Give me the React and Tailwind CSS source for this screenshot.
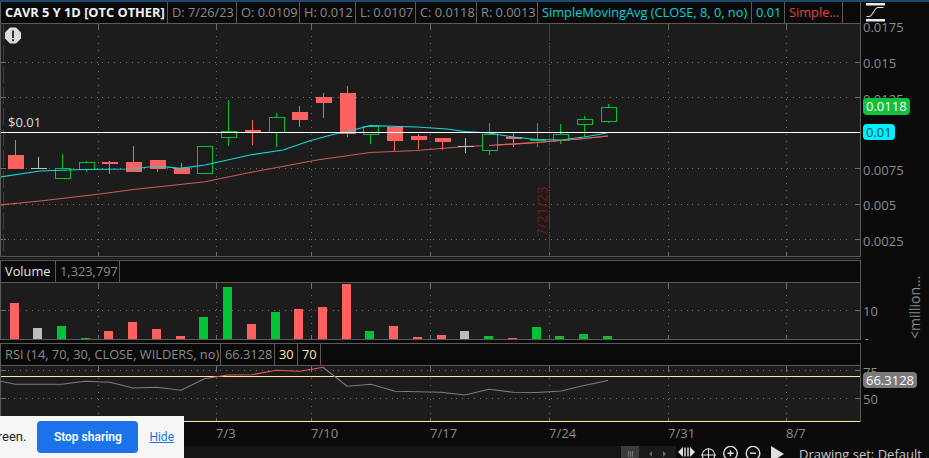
const FONT = "font-['Open_Sans',_'Noto_Sans',_sans-serif]"

const GRID_X = [98.5, 216.5, 311.5, 430.5, 549.5, 668.5, 786.5]
const RED = '#ff6060'
const GREEN = '#00c234'
const GRAY = '#bdbdbd'

// x comes from the index, all y values are page pixels
const candles = [
  { k: 'r', hi: 140, top: 155, bot: 169, lo: 169, vol: 303 },
  { k: 'n', hi: 157, top: 168, bot: 169, lo: 169, vol: 328 },
  { k: 'g', hi: 154, top: 168, bot: 178, lo: 178, vol: 326 },
  { k: 'g', hi: 161, top: 162, bot: 169, lo: 172, vol: 338 },
  { k: 'r', hi: 161, top: 162, bot: 164, lo: 174, vol: 331 },
  { k: 'r', hi: 146, top: 162, bot: 172, lo: 172, vol: 322 },
  { k: 'r', hi: 160, top: 160, bot: 169, lo: 172, vol: 329 },
  { k: 'r', hi: 163, top: 168, bot: 174, lo: 174, vol: 336 },
  { k: 'g', hi: 146, top: 146, bot: 173, lo: 173, vol: 317 },
  { k: 'g', hi: 100, top: 131, bot: 137, lo: 146, vol: 287 },
  { k: 'r', hi: 120, top: 130, bot: 132, lo: 145, vol: 324 },
  { k: 'g', hi: 113, top: 117, bot: 132, lo: 147, vol: 312 },
  { k: 'r', hi: 106, top: 112, bot: 120, lo: 127, vol: 309 },
  { k: 'r', hi: 93, top: 97, bot: 103, lo: 118, vol: 307 },
  { k: 'r', hi: 86, top: 93, bot: 134, lo: 137, vol: 284 },
  { k: 'g', hi: 125, top: 126, bot: 134, lo: 144, vol: 331 },
  { k: 'r', hi: 126, top: 127, bot: 141, lo: 151, vol: 326 },
  { k: 'r', hi: 134, top: 136, bot: 140, lo: 149, vol: 337 },
  { k: 'r', hi: 138, top: 138, bot: 142, lo: 150, vol: 335 },
  { k: 'n', hi: 138, top: 146, bot: 147, lo: 153, vol: 331 },
  { k: 'g', hi: 123, top: 134, bot: 150, lo: 155, vol: 336 },
  { k: 'r', hi: 133, top: 137, bot: 139, lo: 147, vol: 338 },
  { k: 'gf', hi: 123, top: 139, bot: 141, lo: 147, vol: 327 },
  { k: 'g', hi: 124, top: 134, bot: 140, lo: 144, vol: 336 },
  { k: 'g', hi: 116, top: 119, bot: 124, lo: 137, vol: 334 },
  { k: 'g', hi: 104, top: 107, bot: 121, lo: 123, vol: 336 },
]
const cx = (i) => Math.round(14.5 + 23.73 * i) + 0.5
const colorOf = (k) => (k === 'r' ? RED : k === 'n' ? GRAY : GREEN)

const cyanLine = '0,177 40,171 83,169.5 133,169 157,166 180,168.3 205,165 250,155 283,150 310,140.7 333,134.5 353,130 370,125.7 417,127 447,129 465,131.5 489,133 513,137 537,139.5 561,140 584,137 607,133'
const redLine = '0,205 40,201 100,194 133,189.5 157,187 205,181.7 250,172.5 317,160 370,152.5 417,150.5 465,146.5 489,145.5 537,142.5 584,138.5 608,136'
const rsiA = '0,381 15,384.3 62,384.3 85,381.3 110,382.3 133,388 157,387.3 181,390.3 205,378.5'
const rsiB = '205,378.5 228,375 252,374.7 276,370.3 300,371.3 323,367.3'
const rsiC = '323,367.3 347,386.3 371,384.3 395,391.3 441,392.3 465,395 489,389.3 513,392.3 537,392.5 561,391 584,385.5 608,380.5'

function HeaderCell({ children, className = '', width }) {
  return (
    <div
      className={`flex h-full shrink-0 items-center whitespace-nowrap border-r border-[#5a5a5a] pl-[4px] text-[12.8px] ${className}`}
      style={{ width }}
    >
      {children}
    </div>
  )
}

function Grid({ top, bottom, rows }) {
  return (
    <g shapeRendering="crispEdges">
      {rows.map((y) => (
        <g key={y}>
          <line x1="8" x2="850" y1={y} y2={y} stroke="#6e6e6e" strokeDasharray="1 4.9" />
          <line x1="1" x2="6" y1={y} y2={y} stroke="#6e6e6e" />
          <line x1="855" x2="861" y1={y} y2={y} stroke="#6e6e6e" />
        </g>
      ))}
      {GRID_X.map((x) => (
        <g key={x}>
          <line x1={x} x2={x} y1={top + 5} y2={bottom - 4} stroke="#6e6e6e" strokeDasharray="1 6" />
          <line x1={x} x2={x} y1={top} y2={top + 5} stroke="#6e6e6e" />
          <line x1={x} x2={x} y1={bottom - 4} y2={bottom} stroke="#6e6e6e" />
        </g>
      ))}
    </g>
  )
}

function Candle({ c, i }) {
  const x = cx(i)
  const color = colorOf(c.k)
  return (
    <g shapeRendering="crispEdges">
      <line x1={x} x2={x} y1={c.hi} y2={c.lo} stroke={color} />
      {c.k === 'g' ? (
        <rect x={x - 7.5} y={c.top + 0.5} width="15" height={c.bot - c.top} fill="#1c1c1c" stroke={color} />
      ) : (
        <rect x={x - 8} y={c.top} width="16" height={c.bot - c.top} fill={color} />
      )}
    </g>
  )
}

function AxisLabel({ y, children }) {
  return (
    <span className="absolute left-[2px] -translate-y-1/2 text-[13px] leading-none text-[#8c8c8c]" style={{ top: y }}>
      {children}
    </span>
  )
}

function Badge({ y, h, className, children }) {
  return (
    <span
      className={`absolute left-[2px] flex items-center rounded-[4px] px-[3px] text-[13px] leading-none ${className}`}
      style={{ top: y, height: h }}
    >
      {children}
    </span>
  )
}

function CurveIcon() {
  return (
    <svg width="20" height="20" viewBox="0 0 20 20" className="absolute left-[5px] top-[1px]" fill="none">
      <rect x="0" y="0" width="19" height="2.5" fill="#e8e8e8" />
      <rect x="0" y="16" width="19" height="2.5" fill="#e8e8e8" />
      <path d="M0.5 13.5 H3 C7 13.5 8 4.5 12 4.5 H17.5" stroke="#e0e0e0" strokeWidth="1.1" />
    </svg>
  )
}

function Toolbar() {
  return (
    <div className="flex h-[12px] items-start overflow-hidden">
      <div className="h-full w-[621px] bg-[#141414]" />
      <div className="flex h-full w-[18px] items-center justify-center gap-[1px] bg-[#3c3c3c] pt-[3px]">
        <span className="h-[6px] w-px bg-[#777]" />
        <span className="h-[6px] w-px bg-[#777]" />
        <span className="h-[6px] w-px bg-[#777]" />
      </div>
      <div className="flex h-full w-[37px] items-center justify-around bg-[#1a1a1a] px-[4px] pt-[3px]">
        <span className="h-0 w-0 border-y-[3px] border-r-[3px] border-y-transparent border-r-[#666]" />
        <span className="h-0 w-0 border-y-[3px] border-l-[3px] border-y-transparent border-l-[#666]" />
      </div>
      <svg width="110" height="16" viewBox="0 0 110 16" className="shrink-0" fill="none" stroke="#e0e0e0">
        <path d="M2 6 L7 1 V11 Z" fill="#e0e0e0" stroke="none" />
        <path d="M19 6 L14 1 V11 Z" fill="#e0e0e0" stroke="none" />
        <path d="M9 1.5 V10.5 M12 1.5 V10.5" strokeWidth="1.5" />
        <circle cx="32.5" cy="9" r="6.2" strokeWidth="1.1" />
        <path d="M25 9 H40 M32.5 2 V16" strokeWidth="1.1" />
        <circle cx="54.5" cy="7.2" r="6.8" strokeWidth="1.4" />
        <path d="M51.5 7.2 H57.5 M54.5 4.2 V10.2" strokeWidth="1.4" />
        <circle cx="77" cy="7.2" r="6.8" strokeWidth="1.4" />
        <path d="M74 7.2 H80" strokeWidth="1.4" />
        <path d="M95 0 L95 16 L108 8 Z" fill="#e0e0e0" stroke="none" />
      </svg>
      <span className="ml-[13px] whitespace-nowrap text-[13px] leading-[16px] text-[#c8c8c8]">Drawing set: Default</span>
      <span className="ml-[3px] text-[13px] leading-[16px] text-[#c8c8c8]">,</span>
    </div>
  )
}

export default function App() {
  return (
    <div className={`relative h-[458px] w-[929px] overflow-hidden bg-[#0a0a0a] ${FONT}`}>
      <div className="h-[2px] bg-[#1d4a6b]" />

      {/* price pane */}
      <div className="flex h-[255px]">
        <div className="w-[861px] border-x border-b border-[#5a5a5a]">
          <div className="flex h-[22px] border-b border-[#5a5a5a] text-[#8a8a8a]">
            <HeaderCell width={167} className="pl-[3px] font-bold text-[#f2f2f2]">CAVR 5 Y 1D [OTC OTHER]</HeaderCell>
            <HeaderCell width={69}>D: 7/26/23</HeaderCell>
            <HeaderCell width={63}>O: 0.0109</HeaderCell>
            <HeaderCell width={56}>H: 0.012</HeaderCell>
            <HeaderCell width={60}>L: 0.0107</HeaderCell>
            <HeaderCell width={61}>C: 0.0118</HeaderCell>
            <HeaderCell width={61}>R: 0.0013</HeaderCell>
            <HeaderCell width={214} className="pl-[3px] text-[#00d4dc]">SimpleMovingAvg (CLOSE, 8, 0, no)</HeaderCell>
            <HeaderCell width={33} className="pl-[3px] text-[#00d4dc]">0.01</HeaderCell>
            <HeaderCell width={58} className="pl-[3px] text-[#e84040]">Simple...</HeaderCell>
          </div>
          <svg width="859" height="232" viewBox="1 24 859 232" className="block bg-[#1c1c1c]">
            <Grid top={24} bottom={256} rows={[62.5, 97.5, 168.5, 204.5, 239.5]} />
            <line x1="3.5" x2="3.5" y1="24" y2="256" stroke="#8f1c1c" strokeDasharray="17 4" shapeRendering="crispEdges" />
            <line x1="549.5" x2="549.5" y1="24" y2="256" stroke="#951c1c" strokeDasharray="17 4" shapeRendering="crispEdges" />
            <text x="0" y="0" transform="translate(546.5 236.5) rotate(-90)" fontSize="14" fill="#701818">7/21/23</text>
            <polyline points={redLine} fill="none" stroke="#cf5a5a" strokeWidth="1.15" />
            {candles.map((c, i) => <Candle key={i} c={c} i={i} />)}
            <polyline points={cyanLine} fill="none" stroke="#10d8dc" strokeWidth="1.15" />
            <polyline points={redLine.split(' ').slice(11).join(' ')} fill="none" stroke="#e06060" strokeWidth="1.15" />
            <line x1="0" x2="861" y1="132.5" y2="132.5" stroke="#ffffff" shapeRendering="crispEdges" />
            <path d="M10 27.5 h6 l5 5 v6 l-5 5 h-6 l-5 -5 v-6 z" fill="#dcdcdc" />
            <rect x="12" y="30.5" width="2" height="7.5" fill="#333" />
            <rect x="12" y="39.2" width="2" height="2" fill="#333" />
          </svg>
        </div>
        <div className="relative flex-1">
          <CurveIcon />
          <AxisLabel y={25}>0.0175</AxisLabel>
          <AxisLabel y={61}>0.015</AxisLabel>
          <AxisLabel y={97}>0.0125</AxisLabel>
          <Badge y={96} h={17} className="bg-[#0fc03c] text-white">0.0118</Badge>
          <Badge y={122} h={16} className="bg-[#00f0ff] text-[#1a4a50]">0.01</Badge>
          <AxisLabel y={167.5}>0.0075</AxisLabel>
          <AxisLabel y={203}>0.005</AxisLabel>
          <AxisLabel y={238.5}>0.0025</AxisLabel>
        </div>
      </div>

      <div className="mt-[1px] h-px w-[861px] bg-[#3a3a3a]" />

      {/* last-price label, over the price chart just above the white line */}
      <span className="absolute left-[8px] top-[116px] text-[13px] leading-none text-[#dcdcdc]">$0.01</span>

      {/* volume pane */}
      <div className="mt-[1px] flex h-[80px]">
        <div className="w-[861px] border border-[#5a5a5a]">
          <div className="flex h-[22px] border-b border-[#5a5a5a] text-[#8a8a8a]">
            <HeaderCell width={55} className="pl-[3px] text-[#e6e6e6]">Volume</HeaderCell>
            <HeaderCell width={64}>1,323,797</HeaderCell>
          </div>
          <svg width="859" height="56" viewBox="1 283 859 56" className="block bg-[#1c1c1c]">
            <Grid top={283} bottom={339} rows={[310.5]} />
            <g shapeRendering="crispEdges">
              {candles.map((c, i) => (
                <rect key={i} x={cx(i) - 5.5} y={c.vol} width="9" height={339 - c.vol} fill={colorOf(c.k)} />
              ))}
            </g>
          </svg>
        </div>
        <div className="relative flex-1 overflow-hidden">
          <AxisLabel y={50.5}>10</AxisLabel>
          <AxisLabel y={83}>0</AxisLabel>
          <span className="absolute left-[54px] top-[72px] origin-left -rotate-90 whitespace-nowrap text-[14px] leading-none text-[#8c8c8c]">&lt;million...</span>
        </div>
      </div>

      {/* rsi pane */}
      <div className="mt-[3px] flex h-[79px]">
        <div className="w-[861px] border-x border-t border-[#5a5a5a]">
          <div className="flex h-[22px] border-b border-[#5a5a5a] text-[#8a8a8a]">
            <HeaderCell width={220} className="pl-[3px]">RSI (14, 70, 30, CLOSE, WILDERS, no)</HeaderCell>
            <HeaderCell width={54}>66.3128</HeaderCell>
            <HeaderCell width={23} className="text-[#ffe9a8]">30</HeaderCell>
            <HeaderCell width={23} className="text-[#ffe9a8]">70</HeaderCell>
          </div>
          <svg width="859" height="56" viewBox="1 366 859 56" className="block bg-[#1c1c1c]">
            <Grid top={366} bottom={422} rows={[370.5, 398.5]} />
            <line x1="0" x2="861" y1="376.5" y2="376.5" stroke="#ffe9a0" shapeRendering="crispEdges" />
            <line x1="0" x2="861" y1="421.5" y2="421.5" stroke="#ffe9a0" shapeRendering="crispEdges" />
            <polyline points={rsiA} fill="none" stroke="#7c7c7c" strokeWidth="1.1" />
            <polyline points={rsiB} fill="none" stroke="#e85858" strokeWidth="1.1" />
            <polyline points={rsiC} fill="none" stroke="#7c7c7c" strokeWidth="1.1" />
          </svg>
        </div>
        <div className="relative flex-1">
          <AxisLabel y={29}>75</AxisLabel>
          <Badge y={29} h={16} className="bg-[#7a7a7a] text-white">66.3128</Badge>
          <AxisLabel y={55.5}>50</AxisLabel>
        </div>
      </div>

      {/* time axis */}
      <div className="relative h-[24px] text-[13px] leading-none text-[#8c8c8c]">
        <span className="absolute left-[216px] top-[5px]">7/3</span>
        <span className="absolute left-[311px] top-[5px]">7/10</span>
        <span className="absolute left-[430px] top-[5px]">7/17</span>
        <span className="absolute left-[549px] top-[5px]">7/24</span>
        <span className="absolute left-[668px] top-[5px]">7/31</span>
        <span className="absolute left-[786px] top-[5px]">8/7</span>
      </div>

      <Toolbar />

      {/* screen-share notice, over the chart */}
      <div className="absolute bottom-0 left-0 flex h-[42px] w-[184px] items-center justify-end gap-[11px] overflow-hidden bg-[#f6f6f6] pr-[10px] font-['Roboto',_sans-serif] text-[12px]">
        <span className="whitespace-nowrap text-[13px] text-[#222]">reen.</span>
        <span className="flex h-[32px] w-[101px] shrink-0 items-center justify-center rounded-[4px] bg-[#1a73e8] font-semibold text-white">Stop sharing</span>
        <span className="shrink-0 text-[#1a73e8] underline">Hide</span>
      </div>
    </div>
  )
}
